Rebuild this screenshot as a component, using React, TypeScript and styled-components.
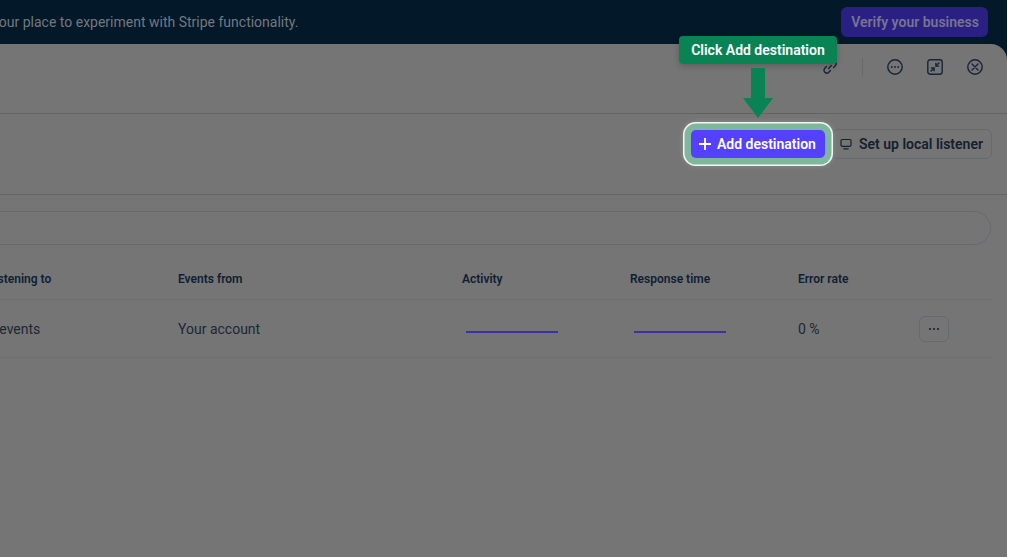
import styled, { createGlobalStyle } from 'styled-components'

const GlobalStyle = createGlobalStyle`
  html, body {
    margin: 0;
    background: #ffffff;
  }
  body {
    font-family: 'Roboto', 'Liberation Sans', sans-serif;
    color: #0e1c2f;
  }
`

const Page = styled.div`
  width: 1007px;
  height: 557px;
  overflow: hidden;
  display: flex;
  flex-direction: column;
  background: #031829;
`

const Banner = styled.div`
  height: 44px;
  flex: none;
  display: flex;
  align-items: center;
  justify-content: space-between;
  padding-right: 19px;
`

const BannerText = styled.span`
  margin-left: -52px;
  font-size: 14px;
  white-space: nowrap;
  color: #74797f;
`

const VerifyButton = styled.div`
  height: 30px;
  padding: 0 9px 0 10px;
  display: flex;
  align-items: center;
  border-radius: 6px;
  background: #2a2084;
  color: #767491;
  font-size: 14px;
  font-weight: 600;
`

const Panel = styled.div`
  flex: 1;
  display: flex;
  flex-direction: column;
  background: #757575;
  border-top-right-radius: 16px;
`

const PanelHeader = styled.div`
  height: 70px;
  flex: none;
  box-sizing: border-box;
  display: flex;
  align-items: center;
  justify-content: flex-end;
  padding: 0 24px 23px 0;
  border-bottom: 1px solid #626567;
`

const IconButton = styled.span<{ $gap?: number }>`
  display: flex;
  margin-left: ${({ $gap }) => $gap ?? 0}px;
  color: #17243a;
`

const HeaderDivider = styled.span`
  width: 1px;
  height: 18px;
  margin-left: 24px;
  background: #656a6e;
`

const Toolbar = styled.div`
  height: 81px;
  flex: none;
  box-sizing: border-box;
  display: flex;
  justify-content: flex-end;
  align-items: flex-start;
  padding: 15px 15px 0 0;
  border-bottom: 1px solid #626567;
`

const Spotlight = styled.div`
  position: relative;
  z-index: 1;
  margin-right: 7px;
  padding-top: 1px;
`

const PrimaryButton = styled.div`
  height: 28px;
  width: 134px;
  box-sizing: border-box;
  display: flex;
  align-items: center;
  gap: 6px;
  padding-left: 8px;
  border-radius: 5px;
  background: #5540ff;
  color: #ffffff;
  font-size: 14px;
  font-weight: 600;
  white-space: nowrap;
  box-shadow: 0 0 0 6.5px #7fb79d, 0 0 0 8px #f2f6f4, 0 0 5px 8px rgba(255, 255, 255, 0.2);
`

const Tooltip = styled.div`
  position: absolute;
  left: -12px;
  top: -93px;
  width: 158px;
  height: 28px;
  display: flex;
  align-items: center;
  justify-content: center;
  border-radius: 4px;
  background: #0a8354;
  color: #ffffff;
  font-size: 14px;
  font-weight: 600;
  white-space: nowrap;
  box-shadow: 0 2px 6px rgba(0, 0, 0, 0.2);
`

const ArrowMark = styled.svg`
  position: absolute;
  left: 52px;
  top: -61px;
`

const SecondaryButton = styled.div`
  height: 30px;
  box-sizing: border-box;
  display: flex;
  align-items: center;
  gap: 7px;
  padding: 0 8px 0 7px;
  border: 1px solid #656a70;
  border-radius: 6px;
  color: #14202f;
  font-size: 14px;
  font-weight: 600;
  white-space: nowrap;
`

const Content = styled.div`
  padding: 16px 15px 0 0;
`

const SearchField = styled.div`
  height: 34px;
  margin: 0 1px 0 -40px;
  box-sizing: border-box;
  border: 1px solid #656a70;
  border-radius: 17px;
`

const TableRow = styled.div<{ $height: number; $top?: number }>`
  height: ${({ $height }) => $height}px;
  box-sizing: border-box;
  margin-left: -12px;
  padding-top: ${({ $top }) => $top ?? 0}px;
  display: grid;
  grid-template-columns: 190px 284px 168px 168px 121px 1fr;
  align-items: center;
  border-bottom: 1px solid #6c6e70;
`

const HeaderCell = styled.div`
  font-size: 12px;
  font-weight: 600;
  color: #0f1e33;
  white-space: nowrap;
`

const Cell = styled.div`
  font-size: 14px;
  color: #1b2735;
  white-space: nowrap;
`

const Sparkline = styled.svg`
  display: block;
  margin: 6px 0 0 4px;
`

const MoreButton = styled.div`
  width: 30px;
  height: 26px;
  box-sizing: border-box;
  display: flex;
  align-items: center;
  justify-content: center;
  border: 1px solid #656a70;
  border-radius: 6px;
  color: #17243a;
`

function LinkIcon() {
  return (
    <svg width="16" height="16" viewBox="0 0 16 16" fill="none" stroke="currentColor" strokeWidth="1.4" strokeLinecap="round">
      <path d="M6.6 9.4 9.4 6.6" />
      <path d="M7.6 4.4 9.2 2.8a2.8 2.8 0 0 1 4 4l-1.6 1.6" />
      <path d="M8.4 11.6 6.8 13.2a2.8 2.8 0 0 1-4-4l1.6-1.6" />
    </svg>
  )
}

function MoreCircleIcon() {
  return (
    <svg width="16" height="16" viewBox="0 0 16 16" fill="none" stroke="currentColor" strokeWidth="1.4">
      <circle cx="8" cy="8" r="7.2" />
      <circle cx="4.8" cy="8" r="0.9" fill="currentColor" stroke="none" />
      <circle cx="8" cy="8" r="0.9" fill="currentColor" stroke="none" />
      <circle cx="11.2" cy="8" r="0.9" fill="currentColor" stroke="none" />
    </svg>
  )
}

function CollapseIcon() {
  return (
    <svg width="16" height="16" viewBox="0 0 16 16" fill="none" stroke="currentColor" strokeWidth="1.4">
      <rect x="0.8" y="0.8" width="14.4" height="14.4" rx="2.4" />
      <path d="M12.4 3.6 9 7" />
      <path d="M8.9 3.8v3.3h3.3" />
      <path d="M3.6 12.4 7 9" />
      <path d="M7.1 12.2V8.9H3.8" />
    </svg>
  )
}

function CloseCircleIcon() {
  return (
    <svg width="16" height="16" viewBox="0 0 16 16" fill="none" stroke="currentColor" strokeWidth="1.4" strokeLinecap="round">
      <circle cx="8" cy="8" r="7.2" />
      <path d="M5 5l6 6M11 5l-6 6" />
    </svg>
  )
}

function MonitorIcon() {
  return (
    <svg width="12" height="12" viewBox="0 0 12 12" fill="none" stroke="currentColor" strokeWidth="1.2" strokeLinecap="round">
      <rect x="1" y="1.5" width="10" height="6.8" rx="1.2" />
      <path d="M3.8 10.8h4.4" />
    </svg>
  )
}

function PlusIcon() {
  return (
    <svg width="12" height="12" viewBox="0 0 12 12" fill="none" stroke="currentColor" strokeWidth="1.8">
      <path d="M6 0v12M0 6h12" />
    </svg>
  )
}

function Flatline() {
  return (
    <Sparkline width="92" height="2" viewBox="0 0 92 2">
      <path d="M0 1h92" stroke="#3d2fa6" strokeWidth="2" />
    </Sparkline>
  )
}

export default function App() {
  return (
    <Page>
      <GlobalStyle />
      <Banner>
        <BannerText>This is your place to experiment with Stripe functionality.</BannerText>
        <VerifyButton>Verify your business</VerifyButton>
      </Banner>
      <Panel>
        <PanelHeader>
          <IconButton>
            <LinkIcon />
          </IconButton>
          <HeaderDivider />
          <IconButton $gap={24}>
            <MoreCircleIcon />
          </IconButton>
          <IconButton $gap={24}>
            <CollapseIcon />
          </IconButton>
          <IconButton $gap={24}>
            <CloseCircleIcon />
          </IconButton>
        </PanelHeader>
        <Toolbar>
          <Spotlight>
            <Tooltip>Click Add destination</Tooltip>
            <ArrowMark width="30" height="50" viewBox="0 0 30 50">
              <path d="M8 0h14v30h8L15 50 0 30h8z" fill="#0a8354" />
            </ArrowMark>
            <PrimaryButton>
              <PlusIcon />
              Add destination
            </PrimaryButton>
          </Spotlight>
          <SecondaryButton>
            <MonitorIcon />
            Set up local listener
          </SecondaryButton>
        </Toolbar>
        <Content>
          <SearchField />
          <TableRow $height={55} $top={14}>
            <HeaderCell>Listening to</HeaderCell>
            <HeaderCell>Events from</HeaderCell>
            <HeaderCell>Activity</HeaderCell>
            <HeaderCell>Response time</HeaderCell>
            <HeaderCell>Error rate</HeaderCell>
            <span />
          </TableRow>
          <TableRow $height={58}>
            <Cell>3 events</Cell>
            <Cell>Your account</Cell>
            <Flatline />
            <Flatline />
            <Cell>0 %</Cell>
            <MoreButton>
              <svg width="12" height="4" viewBox="0 0 12 4" fill="currentColor">
                <circle cx="2" cy="2" r="1.1" />
                <circle cx="6" cy="2" r="1.1" />
                <circle cx="10" cy="2" r="1.1" />
              </svg>
            </MoreButton>
          </TableRow>
        </Content>
      </Panel>
    </Page>
  )
}
